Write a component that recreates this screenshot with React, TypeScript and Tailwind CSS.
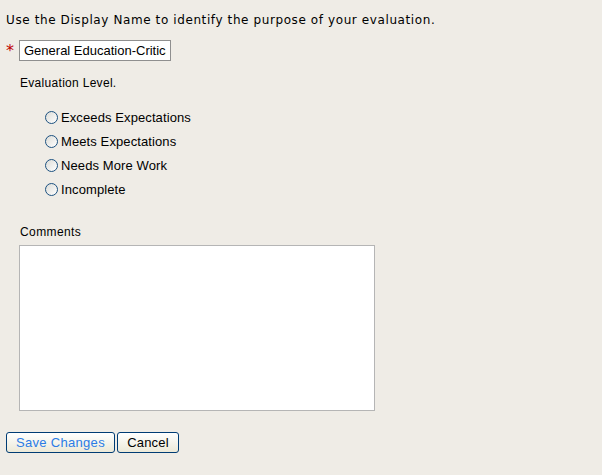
export default function App() {
  const levels = ['Exceeds Expectations', 'Meets Expectations', 'Needs More Work', 'Incomplete']
  return (
    <div className="min-h-[475px] bg-[#efece6] px-[6px] pt-[12px] text-black" style={{ fontFamily: '"Liberation Sans", Arial, sans-serif' }}>
      <p className="text-[12px] leading-[16px] tracking-[0.6px]" style={{ fontFamily: '"DejaVu Sans", Verdana, sans-serif' }}>
        Use the Display Name to identify the purpose of your evaluation.
      </p>
      <div className="mt-[12px] flex items-center">
        <span className="w-[13px] text-[16px] leading-none text-[#c00000]" style={{ fontFamily: '"DejaVu Sans", sans-serif' }}>*</span>
        <input
          readOnly
          value="General Education-Critical Thinking"
          className="h-[21px] w-[152px] border border-[#8f8f8f] bg-white px-[4px] text-[13px] outline-none"
        />
      </div>
      <div className="ml-[14px] mt-[14px] text-[12px] leading-[16px] tracking-[0.3px]">Evaluation Level.</div>
      <div className="ml-[39px] mt-[18px] flex flex-col gap-[7px]">
        {levels.map((l) => (
          <label key={l} className="flex h-[17px] items-center gap-[3px] text-[13px] tracking-[0.1px]">
            <span className="h-[13px] w-[13px] rounded-full border border-[#1c5180] bg-gradient-to-br from-[#dcdcd7] to-white" />
            {l}
          </label>
        ))}
      </div>
      <div className="ml-[14px] mt-[26px] text-[12px] leading-[16px] tracking-[0.4px]">Comments</div>
      <textarea className="ml-[13px] mt-[5px] block h-[166px] w-[356px] resize-none border border-[#b5b5b5] bg-white outline-none" />
      <div className="mt-[21px] flex gap-[2px]">
        <button className="h-[21px] w-[109px] rounded-[3px] border border-[#003c74] bg-gradient-to-b from-white to-[#ece9d8] text-[13px] tracking-[0.3px] text-[#2b7ce6]">
          Save Changes
        </button>
        <button className="h-[21px] w-[62px] rounded-[3px] border border-[#003c74] bg-gradient-to-b from-white to-[#ece9d8] text-[13px] tracking-[0.2px]">
          Cancel
        </button>
      </div>
    </div>
  )
}
